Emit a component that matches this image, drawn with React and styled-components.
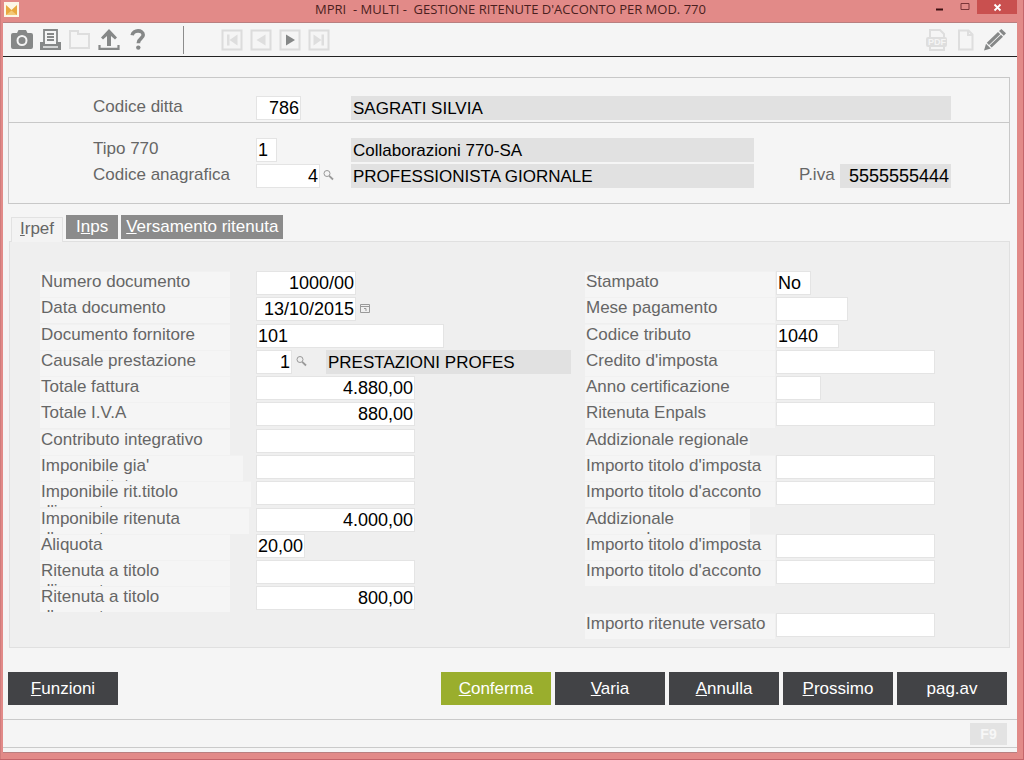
import React, { useState } from "react";
import styled, { createGlobalStyle } from "styled-components";

const GlobalStyle = createGlobalStyle`
  * {
    box-sizing: border-box;
  }

  body {
    margin: 0;
    font-family: "Liberation Sans", Arial, sans-serif;
    font-size: 17px;
    color: #666;
  }

  button, input {
    font-family: inherit;
  }
`;

const Window = styled.div`
  display: flex;
  flex-direction: column;
  min-height: 100vh;
  padding: 0 7px 7px 3px;
  background: #e28a88;
  box-shadow: inset -1px -1px 0 #c4656a, inset 1px 0 0 #d07c7c;
`;

const TitleBar = styled.header`
  display: grid;
  grid-template-columns: 1fr auto 1fr;
  height: 23px;
  padding-left: 1px;
  border-bottom: 1px solid #b97f80;

  h1 {
    margin: 0;
    font-family: "Open Sans", "Noto Sans", sans-serif;
    font-size: 13px;
    font-weight: 400;
    line-height: 19px;
    text-align: center;
    white-space: pre;
    color: #4a1f20;
  }
`;

const WindowButtons = styled.div`
  display: flex;
  justify-content: flex-end;
`;

const AppIcon = styled.svg`
  width: 15px;
  height: 15px;
  margin-top: 2px;
`;

const WindowButton = styled.button`
  display: flex;
  align-items: center;
  justify-content: center;
  width: ${(props) => (props.$close ? "40px" : "25px")};
  height: 14px;
  padding: 0;
  border: 0;
  color: ${(props) => (props.$close ? "#fff" : "#7a3538")};
  background: ${(props) => (props.$close ? "#c9504f" : "transparent")};
`;

const Content = styled.div`
  flex: 1;
  display: flex;
  flex-direction: column;
  background: #f5f5f5;
  border-bottom: 1px solid #b97f80;
`;

const Toolbar = styled.div`
  display: flex;
  align-items: center;
  height: 34px;
  padding: 0 10px 0 7px;
  border-bottom: 1px solid #222;
`;

const ToolGroup = styled.div`
  display: flex;
  gap: 5px;
`;

const ToolButton = styled.button`
  display: flex;
  width: 24px;
  height: 24px;
  padding: 0;
  border: 0;
  background: transparent;
  color: ${(props) => (props.disabled ? "#dedede" : "#868888")};

  svg {
    width: 24px;
    height: 24px;
  }
`;

const Separator = styled.span`
  width: 1px;
  height: 28px;
  margin: 0 36px 0 33px;
  background: #8c8c8c;
`;

const Spacer = styled.span`
  flex: 1;
`;

const HeaderBox = styled.section`
  margin: 20px 7px 0 5px;
  border: 1px solid #c8c8c8;
`;

const HeaderGroup = styled.div`
  display: flex;
  flex-direction: column;
  gap: 2px;
  padding: ${(props) => (props.$first ? "18px 58px 2px 84px" : "15px 58px 15px 84px")};
  border-top: ${(props) => (props.$first ? "0" : "1px solid #c8c8c8")};
`;

const HeaderRow = styled.div`
  display: flex;
  height: 24px;

  label {
    line-height: 21px;
    white-space: nowrap;
  }

  > label {
    flex: 0 0 163px;
  }
`;

const HeaderCell = styled.div`
  display: flex;
  flex: 0 0 95px;
  gap: 3px;
`;

const VatCell = styled.div`
  display: flex;
  justify-content: space-between;
  width: 152px;
  margin-left: auto;
`;

const Field = styled.input`
  width: ${(props) => props.$width}px;
  height: 24px;
  padding: 1px 1px 0;
  border: 1px solid #e4e4e4;
  outline: 0;
  background: #fff;
  color: #000;
  font-size: 18px;
  text-align: ${(props) => (props.$right ? "right" : "left")};
`;

const Readout = styled.output`
  display: block;
  flex: ${(props) => (props.$width ? `0 0 ${props.$width}px` : "1")};
  height: 24px;
  padding: 0 2px;
  background: #e1e1e1;
  color: #000;
  font-size: ${(props) => (props.$right ? "18px" : "17px")};
  line-height: 25px;
  text-align: ${(props) => (props.$right ? "right" : "left")};
  white-space: nowrap;
`;

const IconButton = styled.button`
  display: flex;
  align-items: center;
  width: 11px;
  height: 22px;
  padding: 0;
  border: 0;
  background: transparent;
`;

const Tabs = styled.div`
  display: flex;
  align-items: flex-start;
  gap: 3px;
  margin: 11px 7px 0 8px;
`;

const Tab = styled.button`
  position: relative;
  z-index: ${(props) => (props.$active ? 1 : 0)};
  height: ${(props) => (props.$active ? "25px" : "24px")};
  margin: ${(props) => (props.$active ? "2px 0 -1px" : "0 0 2px")};
  padding: 0 ${(props) => props.$pad || 8}px ${(props) => (props.$active ? 2 : 0)}px;
  border: ${(props) => (props.$active ? "1px solid #e2e2e2" : "0")};
  border-bottom: 0;
  background: ${(props) => (props.$active ? "#f3f3f3" : "#8b8b8b")};
  color: ${(props) => (props.$active ? "#666" : "#fff")};
  font-size: 17px;
  line-height: 22px;
`;

const Panel = styled.section`
  flex: 1;
  display: grid;
  grid-template-columns: 545px 1fr;
  margin: 0 7px 0 6px;
  padding: 29px 0 8px 30px;
  border: 1px solid #e0e0e0;
  background: #efefef;
`;

const Column = styled.div`
  display: grid;
  grid-template-rows: repeat(14, minmax(26px, 1fr));
`;

const Row = styled.div`
  display: flex;
`;

const LabelCell = styled.div`
  flex: 0 0 ${(props) => props.$cell}px;
  height: 26px;
`;

const FieldLabel = styled.label`
  display: block;
  width: ${(props) => props.$width}px;
  height: 26px;
  padding-left: 1px;
  overflow: hidden;
  border-top: 1px solid #f1f1f1;
  background: #f5f5f5;
  line-height: 20px;
`;

const FieldCell = styled.div`
  display: flex;
  gap: 4px;
`;

const CausaleText = styled.div`
  display: flex;
  width: 245px;
  margin-left: 15px;
`;

const Actions = styled.div`
  display: flex;
  gap: 4px;
  margin: 24px 10px 14px 5px;
`;

const ActionButton = styled.button`
  width: 110px;
  height: 33px;
  padding: 0;
  border: 0;
  background: ${(props) => (props.$primary ? "#9aae2d" : "#424346")};
  color: #fff;
  font-size: 17px;
`;

const StatusBar = styled.footer`
  display: flex;
  align-items: center;
  justify-content: flex-end;
  height: 29px;
  margin-bottom: 4px;
  padding-right: 10px;
  border-top: 1px solid #cacaca;
  border-bottom: 1px solid #cacaca;
`;

const KeyButton = styled.button`
  width: 37px;
  height: 22px;
  padding: 0;
  border: 0;
  background: #e3e3e3;
  color: #f7f7f7;
  font-size: 14px;
  font-weight: bold;
`;

const leftRows = [
  { name: "numero", label: "Numero documento", width: 100, right: true },
  { name: "data", label: "Data documento", width: 100, right: true, calendar: true },
  { name: "fornitore", label: "Documento fornitore", width: 188 },
  { name: "causale", label: "Causale prestazione", width: 36, right: true, search: true, text: "PRESTAZIONI PROFES" },
  { name: "totale", label: "Totale fattura", width: 159, right: true },
  { name: "iva", label: "Totale I.V.A", width: 159, right: true },
  { name: "contributo", label: "Contributo integrativo", width: 159, right: true },
  { name: "assoggettato", label: "Imponibile gia' assoggettato", labelWidth: 203, width: 159, right: true },
  { name: "impTitoloImposta", label: "Imponibile rit.titolo d'imposta", labelWidth: 211, width: 159, right: true },
  { name: "impAcconto", label: "Imponibile ritenuta d'acconto", labelWidth: 209, width: 159, right: true },
  { name: "aliquota", label: "Aliquota", width: 49 },
  { name: "ritImposta", label: "Ritenuta a titolo d'imposta", width: 159, right: true },
  { name: "ritAcconto", label: "Ritenuta a titolo d'acconto", width: 159, right: true },
];

const rightRows = [
  { name: "stampato", label: "Stampato", width: 35 },
  { name: "mese", label: "Mese pagamento", width: 72 },
  { name: "tributo", label: "Codice tributo", width: 63 },
  { name: "credito", label: "Credito d'imposta", width: 159, right: true },
  { name: "anno", label: "Anno certificazione", width: 45 },
  { name: "enpals", label: "Ritenuta Enpals", width: 159, right: true },
  { name: "regionale", label: "Addizionale regionale", labelWidth: 165 },
  { name: "regImposta", label: "Importo titolo d'imposta", width: 159, right: true },
  { name: "regAcconto", label: "Importo titolo d'acconto", width: 159, right: true },
  { name: "comunale", label: "Addizionale comunale", labelWidth: 165 },
  { name: "comImposta", label: "Importo titolo d'imposta", width: 159, right: true },
  { name: "comAcconto", label: "Importo titolo d'acconto", width: 159, right: true },
  null,
  { name: "versato", label: "Importo ritenute versato", width: 159, right: true },
];

function SearchIcon() {
  return (
    <svg width="11" height="12" viewBox="0 0 11 12" fill="none" stroke="#999">
      <circle cx="4" cy="4.5" r="3" />
      <path d="M6.2 6.8 L10 10.5" strokeWidth="1.8" />
    </svg>
  );
}

function CalendarIcon() {
  return (
    <svg width="11" height="11" viewBox="0 0 11 11" fill="none" stroke="#999">
      <path d="M0.5 1.5 H9.5 V9.5 H0.5 Z M0.5 3.5 H9.5 M4 5.5 H6 V8" />
    </svg>
  );
}

function NavIcon({ children }) {
  return (
    <svg viewBox="0 0 24 24" fill="currentColor">
      <path d="M2.5 2.5 H21.5 V21.5 H2.5 Z" fill="none" stroke="#dcdcdc" strokeWidth="2" />
      {children}
    </svg>
  );
}

function LeftTools() {
  return (
    <ToolGroup>
      <ToolButton aria-label="Cattura">
        <svg viewBox="0 0 24 24" fill="currentColor" fillRule="evenodd">
          <path d="M3 5 H7 L8.5 2 H16 L17.5 5 H21 Q23 5 23 7 V19 Q23 21 21 21 H3 Q1 21 1 19 V7 Q1 5 3 5 Z M12 7 A5.5 5.5 0 1 0 12 18 A5.5 5.5 0 1 0 12 7 Z M12 9 A3.5 3.5 0 1 1 12 16 A3.5 3.5 0 1 1 12 9 Z" />
        </svg>
      </ToolButton>
      <ToolButton aria-label="Stampa">
        <svg viewBox="0 0 24 24" fill="none" stroke="currentColor" strokeWidth="2">
          <path d="M5 14 V2 H18 V14 M8 6 H15 M8 9 H15 M8 12 H15" strokeWidth="1.8" />
          <path d="M1 14 H6 V16 H17 V14 H22 V22 H1 Z" fill="currentColor" stroke="none" />
          <path d="M4 19 H19" stroke="#f5f5f5" strokeWidth="1.4" />
        </svg>
      </ToolButton>
      <ToolButton disabled aria-label="Apri">
        <svg viewBox="0 0 24 24" fill="none" stroke="currentColor" strokeWidth="2">
          <path d="M2 20 V3 H10 V6 H21 V20 Z" />
        </svg>
      </ToolButton>
      <ToolButton aria-label="Carica">
        <svg viewBox="0 0 24 24" fill="currentColor">
          <path d="M12 1 L20 9.5 L18 11.5 L14 8 V18 H10 V8 L6 11.5 L4 9.5 Z" />
          <path d="M2.5 17 V20.8 H21.5 V17" fill="none" stroke="currentColor" strokeWidth="2.2" />
        </svg>
      </ToolButton>
      <ToolButton aria-label="Aiuto">
        <svg viewBox="0 0 24 24" fill="none" stroke="currentColor" strokeWidth="3.6">
          <path d="M6.2 7.2 C7 1.6 17.2 1.4 17.2 7 C17.2 10.4 12.3 10.4 12.3 15.2" />
          <circle cx="12.3" cy="19.6" r="2.2" fill="currentColor" stroke="none" />
        </svg>
      </ToolButton>
    </ToolGroup>
  );
}

function NavTools() {
  return (
    <ToolGroup>
      <ToolButton disabled aria-label="Primo">
        <NavIcon>
          <path d="M7 6.5 H9.5 V17.5 H7 Z M17.5 6.5 V17.5 L9.5 12 Z" />
        </NavIcon>
      </ToolButton>
      <ToolButton disabled aria-label="Precedente">
        <NavIcon>
          <path d="M16.5 6.5 V17.5 L7.5 12 Z" />
        </NavIcon>
      </ToolButton>
      <ToolButton aria-label="Successivo">
        <NavIcon>
          <path d="M8 6.5 V17.5 L17 12 Z" />
        </NavIcon>
      </ToolButton>
      <ToolButton disabled aria-label="Ultimo">
        <NavIcon>
          <path d="M6.5 6.5 V17.5 L14.5 12 Z M14.5 6.5 H17 V17.5 H14.5 Z" />
        </NavIcon>
      </ToolButton>
    </ToolGroup>
  );
}

function RightTools() {
  return (
    <ToolGroup>
      <ToolButton disabled aria-label="PDF">
        <svg viewBox="0 0 24 24" fill="none" stroke="currentColor" strokeWidth="2">
          <path d="M5 9 V2 H15 L19 6 V9 M5 19 V22 H19 V19" />
          <rect x="1" y="9" width="21" height="10" rx="2" fill="currentColor" stroke="none" />
          <text x="12" y="17" textAnchor="middle" fontSize="9" fontWeight="bold" fill="#f5f5f5" stroke="none">PDF</text>
        </svg>
      </ToolButton>
      <ToolButton disabled aria-label="Nuovo">
        <svg viewBox="0 0 24 24" fill="none" stroke="currentColor" strokeWidth="2">
          <path d="M5 2.5 H14.5 L18.5 6.5 V21.5 H5 Z M14 2.5 V7 H18.5" />
        </svg>
      </ToolButton>
      <ToolButton aria-label="Modifica">
        <svg viewBox="0 0 24 24" fill="currentColor">
          <path d="M1 22.5 L3 15.8 L7.8 20.4 Z M3.8 14.8 L15 4 L17.3 6.2 L6 17 Z M6.7 17.6 L18 6.8 L20 8.8 L8.7 19.6 Z M16 3.1 L18.4 1 L23 5.3 L20.8 7.8 Z" />
        </svg>
      </ToolButton>
    </ToolGroup>
  );
}

function FormRow({ row, labelWidth, cellWidth, value, onChange }) {
  return (
    <Row>
      <LabelCell $cell={cellWidth}>
        <FieldLabel as={row.width ? "label" : "span"} htmlFor={row.width ? row.name : undefined} $width={row.labelWidth || labelWidth}>
          {row.label}
        </FieldLabel>
      </LabelCell>
      {row.width && (
        <FieldCell>
          <Field id={row.name} name={row.name} $width={row.width} $right={row.right} value={value || ""} onChange={onChange} />
          {row.search && <IconButton aria-label="Cerca causale"><SearchIcon /></IconButton>}
          {row.calendar && <IconButton aria-label="Calendario"><CalendarIcon /></IconButton>}
          {row.text && (
            <CausaleText>
              <Readout>{row.text}</Readout>
            </CausaleText>
          )}
        </FieldCell>
      )}
    </Row>
  );
}

function App() {
  //state of the whole form, one key for each field
  const [form, setForm] = useState({
    ditta: "786",
    tipo: "1",
    anagrafica: "4",
    numero: "1000/00",
    data: "13/10/2015",
    fornitore: "101",
    causale: "1",
    totale: "4.880,00",
    iva: "880,00",
    impAcconto: "4.000,00",
    aliquota: "20,00",
    ritAcconto: "800,00",
    stampato: "No",
    tributo: "1040",
  });

  function onChangeInput(e) {
    setForm({
      ...form,
      [e.target.name]: e.target.value,
    });
  }

  return (
    <>
      <GlobalStyle />
      <Window>
        <TitleBar>
          <AppIcon viewBox="0 0 15 15">
            <rect width="15" height="15" fill="#fdf6e6" />
            <path d="M2 3 L7.5 8 L13 3 V13 H2 Z" fill="#e9a83f" />
            <path d="M2 13 L7.5 8.5 L13 13 Z" fill="#f3c876" />
          </AppIcon>
          <h1>{"MPRI  - MULTI -  GESTIONE RITENUTE D'ACCONTO PER MOD. 770"}</h1>
          <WindowButtons>
            <WindowButton aria-label="Riduci">
              <svg width="10" height="12"><path d="M1 8.5 H8" stroke="#3c1012" strokeWidth="2" /></svg>
            </WindowButton>
            <WindowButton aria-label="Ingrandisci">
              <svg width="10" height="10"><path d="M1 1.5 H9 V7.5 H1 Z" fill="none" stroke="currentColor" /></svg>
            </WindowButton>
            <WindowButton $close aria-label="Chiudi">
              <svg width="9" height="9"><path d="M1.5 1.5 L7.5 7.5 M7.5 1.5 L1.5 7.5" stroke="currentColor" strokeWidth="1.8" /></svg>
            </WindowButton>
          </WindowButtons>
        </TitleBar>
        <Content>
          <Toolbar>
            <LeftTools />
            <Separator />
            <NavTools />
            <Spacer />
            <RightTools />
          </Toolbar>

          <HeaderBox>
            <HeaderGroup $first>
              <HeaderRow>
                <label htmlFor="ditta">Codice ditta</label>
                <HeaderCell>
                  <Field id="ditta" name="ditta" $width={45} $right value={form.ditta} onChange={onChangeInput} />
                </HeaderCell>
                <Readout>SAGRATI SILVIA</Readout>
              </HeaderRow>
            </HeaderGroup>
            <HeaderGroup>
              <HeaderRow>
                <label htmlFor="tipo">Tipo 770</label>
                <HeaderCell>
                  <Field id="tipo" name="tipo" $width={21} value={form.tipo} onChange={onChangeInput} />
                </HeaderCell>
                <Readout $width={403}>Collaborazioni 770-SA</Readout>
              </HeaderRow>
              <HeaderRow>
                <label htmlFor="anagrafica">Codice anagrafica</label>
                <HeaderCell>
                  <Field id="anagrafica" name="anagrafica" $width={64} $right value={form.anagrafica} onChange={onChangeInput} />
                  <IconButton aria-label="Cerca anagrafica"><SearchIcon /></IconButton>
                </HeaderCell>
                <Readout $width={403}>PROFESSIONISTA GIORNALE</Readout>
                <VatCell>
                  <label htmlFor="piva">P.iva</label>
                  <Readout id="piva" $width={111} $right>5555555444</Readout>
                </VatCell>
              </HeaderRow>
            </HeaderGroup>
          </HeaderBox>

          <Tabs role="tablist">
            <Tab role="tab" aria-selected="true" $active><u>I</u>rpef</Tab>
            <Tab role="tab" aria-selected="false" $pad={10}>I<u>n</u>ps</Tab>
            <Tab role="tab" aria-selected="false" $pad={5}><u>V</u>ersamento ritenuta</Tab>
          </Tabs>
          <Panel>
            <Column>
              {leftRows.map((row) => (
                <FormRow key={row.name} row={row} labelWidth={190} cellWidth={216} value={form[row.name]} onChange={onChangeInput} />
              ))}
            </Column>
            <Column>
              {rightRows.map((row, i) =>
                row ? (
                  <FormRow key={row.name} row={row} labelWidth={190} cellWidth={191} value={form[row.name]} onChange={onChangeInput} />
                ) : (
                  <Row key={i} />
                )
              )}
            </Column>
          </Panel>

          <Actions>
            <ActionButton><u>F</u>unzioni</ActionButton>
            <Spacer />
            <ActionButton $primary><u>C</u>onferma</ActionButton>
            <ActionButton><u>V</u>aria</ActionButton>
            <ActionButton><u>A</u>nnulla</ActionButton>
            <ActionButton><u>P</u>rossimo</ActionButton>
            <ActionButton>pag.av</ActionButton>
          </Actions>
          <StatusBar>
            <KeyButton disabled>F9</KeyButton>
          </StatusBar>
        </Content>
      </Window>
    </>
  );
}

export default App;
